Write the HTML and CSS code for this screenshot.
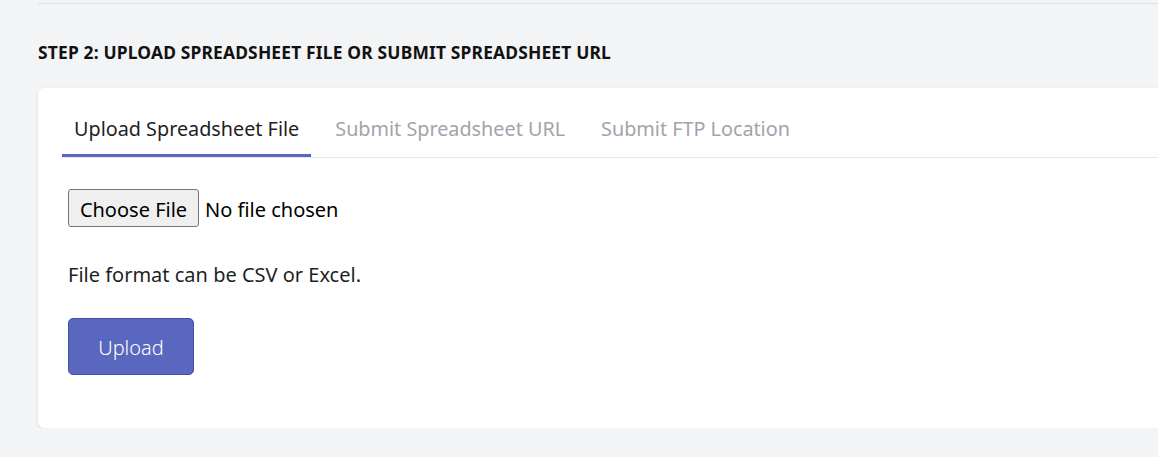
FILE: index.html
```html
<!DOCTYPE html>
<html>
<head>
<meta charset="utf-8">
<link rel="stylesheet" href="styles.css">
</head>
<body>
<div class="page">
  <div class="rule"></div>
  <h2 class="step-title">STEP 2: UPLOAD SPREADSHEET FILE OR SUBMIT SPREADSHEET URL</h2>
  <div class="card">
    <div class="tabs">
      <div class="tab active">Upload Spreadsheet File</div>
      <div class="tab">Submit Spreadsheet URL</div>
      <div class="tab">Submit FTP Location</div>
    </div>
    <div class="panel">
      <div class="file-row">
        <span class="file-btn">Choose File</span>
        <span class="file-name">No file chosen</span>
      </div>
      <p class="hint">File format can be CSV or Excel.</p>
      <button class="upload-btn">Upload</button>
    </div>
  </div>
</div>
</body>
</html>
```
FILE: styles.css
```css
html, body {
  margin: 0;
  padding: 0;
  background: #f3f4f6;
  overflow: hidden;
}
body {
  font-family: "Noto Sans", "Open Sans", sans-serif;
  color: #1f1f1f;
}
.page {
  padding-left: 38px;
  padding-top: 3px;
}
.rule {
  border-top: 1px solid #dedede;
  margin-right: -20px;
}
.step-title {
  margin: 38px 0 26px;
  font-size: 17.4px;
  line-height: 20px;
  font-weight: 700;
  color: #111;
  letter-spacing: 0.18px;
  white-space: nowrap;
}
.card {
  background: #fff;
  border-radius: 6px;
  box-shadow: 0 1px 3px rgba(0,0,0,0.13);
  margin-right: -30px;
  height: 340px;
  box-sizing: border-box;
  padding-top: 27px;
}
.tabs {
  display: flex;
  margin-left: 24px;
  border-bottom: 1px solid #e6e6e6;
  gap: 12px;
}
.tab {
  padding: 0 12px 11px;
  font-size: 19.8px;
  line-height: 28px;
  color: #a3a3ab;
  border-bottom: 3px solid transparent;
  margin-bottom: -1px;
  white-space: nowrap;
}
.tab.active {
  color: #1f1f1f;
  border-bottom-color: #5a67be;
}
.tabs .tab.active { margin-bottom: 0; }
.panel {
  padding: 31px 30px 0;
}
.file-row {
  display: flex;
  align-items: center;
  height: 38px;
  font-size: 20px;
}
.file-btn {
  display: flex;
  align-items: center;
  justify-content: center;
  box-sizing: border-box;
  width: 131px;
  height: 38px;
  padding-top: 3px;
  background: #efefef;
  border: 1px solid #767676;
  border-radius: 3px;
  color: #000;
}
.file-name {
  margin-left: 6px;
  padding-top: 3px;
  color: #000;
}
.hint {
  margin: 34px 0 0;
  font-size: 20px;
  line-height: 28px;
  color: #1f1f1f;
}
.upload-btn {
  display: block;
  margin-top: 29px;
  width: 126px;
  height: 57px;
  padding: 2px 0 0;
  background: #5a67be;
  border: 1px solid #4450a8;
  border-radius: 5px;
  color: #fff;
  font-family: "Noto Sans", "Open Sans", sans-serif;
  font-size: 20px;
  font-weight: 300;
}
```
